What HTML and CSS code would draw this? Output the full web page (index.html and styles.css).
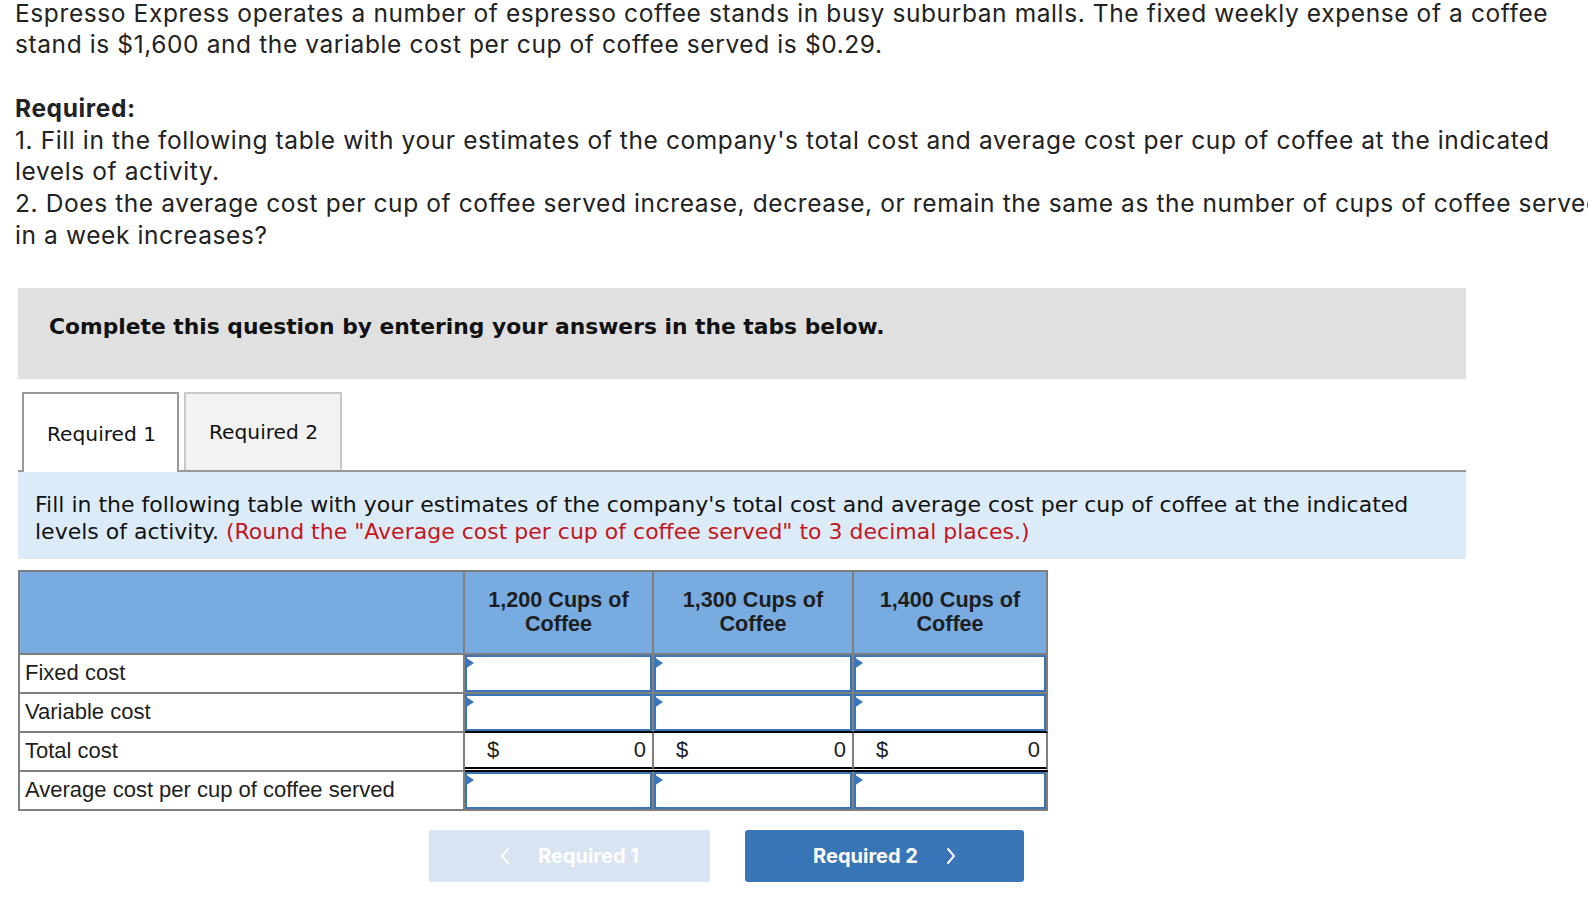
FILE: index.html
```html
<!DOCTYPE html>
<html lang="en">
<head>
<meta charset="utf-8">
<title>Espresso Express</title>
<link rel="stylesheet" href="styles.css">
</head>
<body>
<div class="page">
  <p class="question">Espresso Express operates a number of espresso coffee stands in busy suburban malls. The fixed weekly expense of a coffee<br>stand is $1,600 and the variable cost per cup of coffee served is $0.29.<br><br><strong>Required:</strong><br>1. Fill in the following table with your estimates of the company's total cost and average cost per cup of coffee at the indicated<br>levels of activity.<br>2. Does the average cost per cup of coffee served increase, decrease, or remain the same as the number of cups of coffee served<br>in a week increases?</p>

  <div class="panel">
    <div class="notice">Complete this question by entering your answers in the tabs below.</div>

    <div class="tabs">
      <div class="tab active">Required 1</div>
      <div class="tab">Required 2</div>
    </div>

    <div class="instr">Fill in the following table with your estimates of the company's total cost and average cost per cup of coffee at the indicated<br>levels of activity. <span class="red">(Round the "Average cost per cup of coffee served" to 3 decimal places.)</span></div>

    <table class="grid">
      <colgroup>
        <col class="c-label">
        <col class="c-1">
        <col class="c-2">
        <col class="c-3">
      </colgroup>
      <thead>
        <tr>
          <th></th>
          <th>1,200 Cups of<br>Coffee</th>
          <th>1,300 Cups of<br>Coffee</th>
          <th>1,400 Cups of<br>Coffee</th>
        </tr>
      </thead>
      <tbody>
        <tr>
          <td class="label">Fixed cost</td>
          <td class="inp"><div class="field"></div></td>
          <td class="inp"><div class="field"></div></td>
          <td class="inp"><div class="field"></div></td>
        </tr>
        <tr class="pre-total">
          <td class="label">Variable cost</td>
          <td class="inp"><div class="field"></div></td>
          <td class="inp"><div class="field"></div></td>
          <td class="inp"><div class="field"></div></td>
        </tr>
        <tr class="total">
          <td class="label">Total cost</td>
          <td class="amt"><span>$</span><span>0</span></td>
          <td class="amt"><span>$</span><span>0</span></td>
          <td class="amt"><span>$</span><span>0</span></td>
        </tr>
        <tr>
          <td class="label">Average cost per cup of coffee served</td>
          <td class="inp"><div class="field"></div></td>
          <td class="inp"><div class="field"></div></td>
          <td class="inp"><div class="field"></div></td>
        </tr>
      </tbody>
    </table>

    <div class="nav">
      <button class="btn prev" type="button">
        <svg class="chev" width="10" height="18" viewBox="0 0 10 18"><polyline points="8,2 2,9 8,16" fill="none" stroke="currentColor" stroke-width="2" stroke-linecap="round" stroke-linejoin="round"/></svg>
        <span>Required 1</span>
      </button>
      <button class="btn next" type="button">
        <span>Required 2</span>
        <svg class="chev" width="10" height="18" viewBox="0 0 10 18"><polyline points="2,2 8,9 2,16" fill="none" stroke="currentColor" stroke-width="2" stroke-linecap="round" stroke-linejoin="round"/></svg>
      </button>
    </div>
  </div>
</div>
</body>
</html>
```

FILE: styles.css
```css
html, body {
  margin: 0;
  padding: 0;
  background: #fff;
  overflow: hidden;
}

body {
  width: 1588px;
  height: 916px;
}

.page {
  padding-left: 15px;
}

.question {
  margin: -2.5px 0 0 0;
  font-family: Inter, "Noto Sans", sans-serif;
  font-size: 24.5px;
  letter-spacing: 0.6px;
  line-height: 31.8px;
  color: #222;
  white-space: nowrap;
}

.question strong {
  font-weight: 700;
}

.panel {
  margin: 36.1px 0 0 3px;
  width: 1448px;
}

.notice {
  box-sizing: border-box;
  height: 91px;
  background: #e0e0e0;
  padding: 28px 0 0 31px;
  font-family: "DejaVu Sans", Verdana, sans-serif;
  font-weight: 700;
  font-size: 21.8px;
  line-height: 22px;
  color: #111;
}

.tabs {
  display: flex;
  align-items: flex-end;
  gap: 5px;
  margin-top: 13px;
  padding-left: 4px;
  border-bottom: 2px solid #999;
}

.tab {
  box-sizing: border-box;
  width: 158px;
  height: 78px;
  display: flex;
  align-items: center;
  padding-left: 23px;
  border: 2px solid #c8c8c8;
  border-bottom: 0;
  background: #f2f2f2;
  font-family: "DejaVu Sans", Verdana, sans-serif;
  font-size: 20.2px;
  color: #111;
}

.tab.active {
  width: 157px;
  height: 80px;
  margin-bottom: -2px;
  padding-top: 2px;
  border-color: #9a9a9a;
  background: #fff;
}

.instr {
  box-sizing: border-box;
  height: 87px;
  background: #dcebf8;
  padding: 19px 18px 0 17px;
  font-family: "DejaVu Sans", Verdana, sans-serif;
  font-size: 22px;
  line-height: 27px;
  color: #111;
  white-space: nowrap;
}

.red {
  color: #c4161c;
}

.grid {
  margin-top: 11px;
  table-layout: fixed;
  width: 1030px;
  border-collapse: separate;
  border-spacing: 0;
  border-top: 2px solid #7f7f7f;
  border-left: 2px solid #7f7f7f;
  font-family: "Liberation Sans", Arial, sans-serif;
  font-size: 22px;
  color: #1e1e1e;
}

.c-label { width: 445px; }
.c-1 { width: 189px; }
.c-2 { width: 200px; }
.c-3 { width: 194px; }

.grid th,
.grid td {
  box-sizing: border-box;
  border-right: 2px solid #7f7f7f;
  border-bottom: 2px solid #7f7f7f;
  padding: 0;
}

.grid th {
  height: 83px;
  background: #78ace0;
  font-size: 21.6px;
  font-weight: 700;
  line-height: 24px;
  text-align: center;
  vertical-align: middle;
  color: #1e1e1e;
}

.grid td {
  height: 39px;
}

.grid td.label {
  padding-left: 5px;
  vertical-align: middle;
}

.field {
  position: relative;
  box-sizing: border-box;
  height: 37px;
  border: 2px solid #3a75b8;
  background: #fff;
}

.field::before {
  content: "";
  position: absolute;
  left: -2px;
  top: 0;
  width: 0;
  height: 0;
  border-left: 9px solid #3a76bb;
  border-top: 6px solid transparent;
  border-bottom: 6px solid transparent;
}

.pre-total td.inp {
  border-bottom-color: #000;
}

.total td.amt {
  border-bottom: 5px double #000;
  padding: 0 6px 0 22px;
  vertical-align: middle;
}

.amt span:first-child {
  float: left;
}

.amt span:last-child {
  float: right;
}

.nav {
  display: flex;
  gap: 35px;
  padding: 19px 0 0 411px;
}

.btn {
  box-sizing: border-box;
  height: 52px;
  border: 0;
  border-radius: 3px;
  display: flex;
  align-items: center;
  justify-content: center;
  gap: 28px;
  font-family: Inter, "Noto Sans", sans-serif;
  font-weight: 700;
  font-size: 20px;
  color: #fff;
  padding: 0;
}

.btn.prev {
  width: 281px;
  background: #d8e4f1;
}

.btn.next {
  width: 279px;
  background: #3875b7;
}

.chev {
  display: block;
}
```
